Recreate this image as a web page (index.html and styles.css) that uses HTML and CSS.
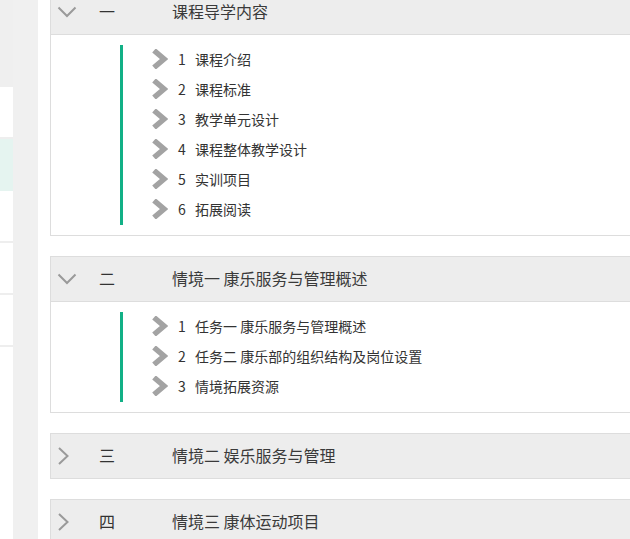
FILE: index.html
```html
<!DOCTYPE html>
<html lang="zh-CN">
<head>
<meta charset="utf-8">
<title>课程目录</title>
<link rel="stylesheet" href="styles.css">
</head>
<body>
<div class="page">
  <aside class="sidebar">
    <div class="side-top"></div>
    <ul class="side-list">
      <li></li>
      <li class="active"></li>
      <li></li>
      <li></li>
      <li></li>
    </ul>
  </aside>
  <main class="main">
    <section class="panel">
      <div class="panel-head">
        <span class="toggle"><svg width="20" height="12" viewBox="0 0 20 12"><polyline points="1.5,1.5 10,10 18.5,1.5" fill="none" stroke="#9a9a9a" stroke-width="2"/></svg></span>
        <span class="num">一</span>
        <span class="title">课程导学内容</span>
      </div>
      <div class="panel-body">
        <ul class="items">
          <li><svg class="chev" width="17" height="20" viewBox="0 0 17 20"><polyline points="3,1.5 13,10 3,18.5" fill="none" stroke="#a3a3a3" stroke-width="5.5"/></svg><span class="idx">1</span><span class="txt">课程介绍</span></li>
          <li><svg class="chev" width="17" height="20" viewBox="0 0 17 20"><polyline points="3,1.5 13,10 3,18.5" fill="none" stroke="#a3a3a3" stroke-width="5.5"/></svg><span class="idx">2</span><span class="txt">课程标准</span></li>
          <li><svg class="chev" width="17" height="20" viewBox="0 0 17 20"><polyline points="3,1.5 13,10 3,18.5" fill="none" stroke="#a3a3a3" stroke-width="5.5"/></svg><span class="idx">3</span><span class="txt">教学单元设计</span></li>
          <li><svg class="chev" width="17" height="20" viewBox="0 0 17 20"><polyline points="3,1.5 13,10 3,18.5" fill="none" stroke="#a3a3a3" stroke-width="5.5"/></svg><span class="idx">4</span><span class="txt">课程整体教学设计</span></li>
          <li><svg class="chev" width="17" height="20" viewBox="0 0 17 20"><polyline points="3,1.5 13,10 3,18.5" fill="none" stroke="#a3a3a3" stroke-width="5.5"/></svg><span class="idx">5</span><span class="txt">实训项目</span></li>
          <li><svg class="chev" width="17" height="20" viewBox="0 0 17 20"><polyline points="3,1.5 13,10 3,18.5" fill="none" stroke="#a3a3a3" stroke-width="5.5"/></svg><span class="idx">6</span><span class="txt">拓展阅读</span></li>
        </ul>
      </div>
    </section>

    <section class="panel">
      <div class="panel-head">
        <span class="toggle"><svg width="20" height="12" viewBox="0 0 20 12"><polyline points="1.5,1.5 10,10 18.5,1.5" fill="none" stroke="#9a9a9a" stroke-width="2"/></svg></span>
        <span class="num">二</span>
        <span class="title">情境一 康乐服务与管理概述</span>
      </div>
      <div class="panel-body">
        <ul class="items">
          <li><svg class="chev" width="17" height="20" viewBox="0 0 17 20"><polyline points="3,1.5 13,10 3,18.5" fill="none" stroke="#a3a3a3" stroke-width="5.5"/></svg><span class="idx">1</span><span class="txt">任务一 康乐服务与管理概述</span></li>
          <li><svg class="chev" width="17" height="20" viewBox="0 0 17 20"><polyline points="3,1.5 13,10 3,18.5" fill="none" stroke="#a3a3a3" stroke-width="5.5"/></svg><span class="idx">2</span><span class="txt">任务二 康乐部的组织结构及岗位设置</span></li>
          <li><svg class="chev" width="17" height="20" viewBox="0 0 17 20"><polyline points="3,1.5 13,10 3,18.5" fill="none" stroke="#a3a3a3" stroke-width="5.5"/></svg><span class="idx">3</span><span class="txt">情境拓展资源</span></li>
        </ul>
      </div>
    </section>

    <section class="panel">
      <div class="panel-head">
        <span class="toggle"><svg width="20" height="18" viewBox="0 0 20 18"><polyline points="2,1 10.5,9 2,17" fill="none" stroke="#9a9a9a" stroke-width="2"/></svg></span>
        <span class="num">三</span>
        <span class="title">情境二 娱乐服务与管理</span>
      </div>
    </section>

    <section class="panel">
      <div class="panel-head">
        <span class="toggle"><svg width="20" height="18" viewBox="0 0 20 18"><polyline points="2,1 10.5,9 2,17" fill="none" stroke="#9a9a9a" stroke-width="2"/></svg></span>
        <span class="num">四</span>
        <span class="title">情境三 康体运动项目</span>
      </div>
    </section>
  </main>
</div>
</body>
</html>
```

FILE: styles.css
```css
html, body {
  margin: 0;
  padding: 0;
}
body {
  background: #f0f0f0;
  overflow: hidden;
  font-family: "Noto Sans CJK SC", "Noto Sans", sans-serif;
  color: #333;
}
.page {
  display: flex;
  align-items: flex-start;
  height: 539px;
  overflow: hidden;
}
.sidebar {
  width: 13px;
  flex-shrink: 0;
  background: #fff;
  height: 539px;
}
.side-top {
  height: 87px;
  background: #efefef;
}
.side-list {
  list-style: none;
  margin: 0;
  padding: 0;
}
.side-list li {
  height: 50px;
  border-bottom: 2px solid #eeeeee;
}
.side-list li.active {
  background: #e5f4f0;
  border-bottom-color: #e5f4f0;
}
.main {
  margin-left: 25px;
  background: #fff;
  width: 720px;
  flex-shrink: 0;
  height: 560px;
  padding-left: 12px;
  box-sizing: border-box;
  display: flex;
  flex-direction: column;
  gap: 20px;
  margin-top: -11px;
}
.panel {
  border: 1px solid #dddddd;
  border-right: none;
}
.panel-head {
  height: 44px;
  background: #ededed;
  display: flex;
  align-items: center;
  font-size: 16px;
  color: #333;
}
.toggle {
  width: 48px;
  padding-left: 6px;
  box-sizing: border-box;
  display: flex;
  align-items: center;
}
.toggle svg {
  display: block;
}
.num {
  width: 73px;
  padding-bottom: 3px;
}
.title {
  color: #3a3a3a;
  padding-bottom: 3px;
}
.panel-body {
  border-top: 1px solid #dddddd;
  background: #fff;
  padding: 10px 0 10px 69px;
}
.items {
  list-style: none;
  margin: 0;
  padding: 0 0 0 28px;
  border-left: 3px solid #12b086;
}
.items li {
  height: 30px;
  display: flex;
  align-items: center;
  font-size: 14px;
  color: #333;
}
.chev {
  display: block;
  flex-shrink: 0;
  margin-bottom: 2px;
}
.idx {
  margin-left: 10px;
  width: 17px;
  padding-bottom: 3px;
}
.txt {
  padding-bottom: 3px;
}
```
